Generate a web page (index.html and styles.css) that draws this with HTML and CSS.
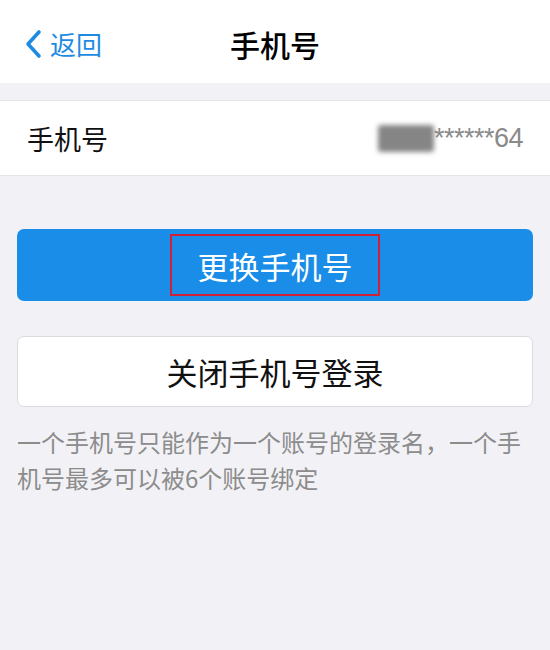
FILE: index.html
```html
<!DOCTYPE html>
<html lang="zh-CN">
<head>
<meta charset="utf-8">
<title>手机号</title>
<link rel="stylesheet" href="styles.css">
</head>
<body>
<header class="navbar">
  <a class="back" href="#">
    <svg class="back-icon" width="20" height="30" viewBox="0 0 20 30" aria-hidden="true">
      <path d="M15 3 L4 15 L15 27" fill="none" stroke="currentColor" stroke-width="3.6" stroke-linecap="round" stroke-linejoin="round"/>
    </svg>
    <span class="back-text">返回</span>
  </a>
  <h1 class="title">手机号</h1>
</header>

<section class="group">
  <div class="cell">
    <span class="cell-label">手机号</span>
    <span class="cell-value"><span class="masked"></span>******64</span>
  </div>
</section>

<div class="actions">
  <button class="btn btn-primary"><span class="highlight">更换手机号</span></button>
  <button class="btn btn-plain">关闭手机号登录</button>
  <p class="hint">一个手机号只能作为一个账号的登录名，一个手机号最多可以被6个账号绑定</p>
</div>
</body>
</html>
```

FILE: styles.css
```css
* {
  box-sizing: border-box;
}

html, body {
  margin: 0;
  padding: 0;
}

body {
  width: 550px;
  height: 650px;
  background: #f2f2f6;
  font-family: "Noto Sans CJK SC", "Noto Sans", sans-serif;
  color: #111;
  overflow: hidden;
}

/* top navigation bar */
.navbar {
  position: relative;
  height: 83px;
  background: #ffffff;
  display: flex;
  align-items: center;
  justify-content: center;
}

.back {
  position: absolute;
  left: 24px;
  top: 28px;
  display: flex;
  align-items: center;
  gap: 6px;
  color: #1e8be2;
  text-decoration: none;
}

.back-icon {
  display: block;
}

.back-text {
  font-size: 26px;
  line-height: 32px;
}

.title {
  margin: 0;
  font-size: 30px;
  font-weight: 500;
  line-height: 36px;
  color: #000;
  transform: translateY(2px);
}

/* phone number cell */
.group {
  margin-top: 17px;
  background: #ffffff;
  border-top: 1px solid #e3e3e8;
  border-bottom: 1px solid #e3e3e8;
}

.cell {
  height: 74px;
  padding: 0 27px;
  display: flex;
  align-items: center;
  justify-content: space-between;
}

.cell-label {
  font-size: 27px;
  color: #111;
}

.cell-value {
  display: flex;
  align-items: center;
  font-family: "Liberation Sans", "Noto Sans", sans-serif;
  font-size: 27px;
  color: #8a8a8a;
  letter-spacing: -0.5px;
}

.masked {
  display: inline-block;
  width: 56px;
  height: 27px;
  background: #858585;
  border-radius: 3px;
  filter: blur(2.5px);
}

/* action buttons */
.actions {
  padding: 53px 17px 0;
  display: flex;
  flex-direction: column;
}

.btn {
  height: 72px;
  border-radius: 7px;
  font-family: inherit;
  font-size: 31px;
  display: flex;
  align-items: center;
  justify-content: center;
  padding: 0;
  cursor: pointer;
}

.btn-primary {
  background: #1a8de8;
  border: none;
  color: #ffffff;
}

.highlight {
  display: flex;
  align-items: center;
  justify-content: center;
  width: 210px;
  height: 62px;
  border: 2px solid #cf2036;
}

.btn-plain {
  margin-top: 35px;
  height: 71px;
  background: #ffffff;
  border: 1px solid #dcdce0;
  color: #111;
}

.hint {
  margin: 17px 0 0;
  font-size: 24px;
  line-height: 36px;
  color: #8c8c8c;
}
```
